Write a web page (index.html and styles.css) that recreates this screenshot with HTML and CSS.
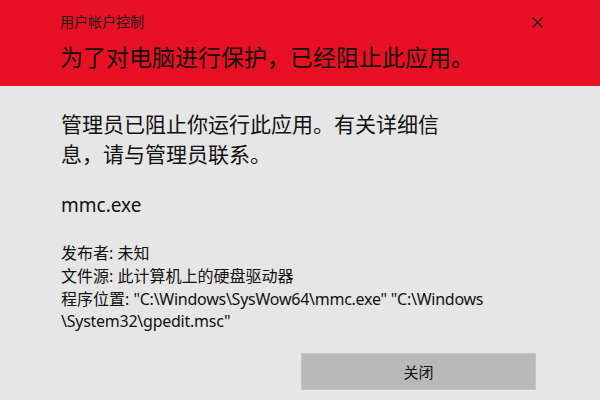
FILE: index.html
```html
<!DOCTYPE html>
<html lang="zh-CN">
<head>
<meta charset="utf-8">
<title>用户帐户控制</title>
<link rel="stylesheet" href="styles.css">
</head>
<body>
<div class="dialog">
  <header class="banner">
    <div class="titlebar">
      <span class="title">用户帐户控制</span>
      <span class="close" aria-label="关闭">
        <svg width="11" height="11" viewBox="0 0 11 11"><path d="M0.5 0.5 L10.5 10.5 M10.5 0.5 L0.5 10.5" stroke="#1a1a1a" stroke-width="1.1" fill="none"/></svg>
      </span>
    </div>
    <h1 class="heading">为了对电脑进行保护，已经阻止此应用。</h1>
  </header>
  <main class="content">
    <p class="message">管理员已阻止你运行此应用。有关详细信息，请与管理员联系。</p>
    <p class="app">mmc.exe</p>
    <div class="details">
      <p>发布者: 未知</p>
      <p>文件源: 此计算机上的硬盘驱动器</p>
      <p>程序位置: <span class="path">"C:\Windows\SysWow64\mmc.exe" "C:\Windows<br>\System32\gpedit.msc"</span></p>
    </div>
    <div class="actions">
      <button class="btn">关闭</button>
    </div>
  </main>
</div>
</body>
</html>
```
FILE: styles.css
```css
html, body {
  margin: 0;
  padding: 0;
}
body {
  width: 600px;
  height: 400px;
  overflow: hidden;
  background: #e6e6e6;
  font-family: "Noto Sans", "Noto Sans CJK SC", sans-serif;
  color: #000;
}
.dialog {
  display: flex;
  flex-direction: column;
}
.banner {
  background: #e81123;
  height: 86px;
  box-sizing: border-box;
  padding: 12px 57px 0 60px;
}
.titlebar {
  display: flex;
  justify-content: space-between;
  align-items: center;
  height: 20px;
}
.title {
  font-size: 14px;
  line-height: 20px;
  color: #1a1a1a;
}
.close {
  display: flex;
  width: 11px;
  height: 11px;
}
.heading {
  margin: 10px 0 0;
  font-size: 23px;
  font-weight: normal;
  line-height: 30px;
  color: #111;
  white-space: nowrap;
}
.content {
  padding: 23px 64px 0 61px;
  display: flex;
  flex-direction: column;
}
.message {
  margin: 0;
  width: 392px;
  font-size: 21px;
  line-height: 30px;
  color: #111;
}
.app {
  margin: 23px 0 0;
  font-size: 19px;
  line-height: 26px;
  color: #111;
}
.details {
  margin-top: 24px;
  display: flex;
  flex-direction: column;
  gap: 1px;
}
.details p {
  margin: 0;
  font-size: 16px;
  line-height: 22px;
  color: #111;
}
.path {
  letter-spacing: -0.25px;
}
.actions {
  margin-top: 21px;
  display: flex;
  justify-content: flex-end;
}
.btn {
  width: 235px;
  height: 37px;
  background: #b9b9b9;
  border: 1px solid #c4c4c4;
  font-family: "Noto Sans", "Noto Sans CJK SC", sans-serif;
  font-size: 15px;
  color: #111;
  padding: 0;
}
```
